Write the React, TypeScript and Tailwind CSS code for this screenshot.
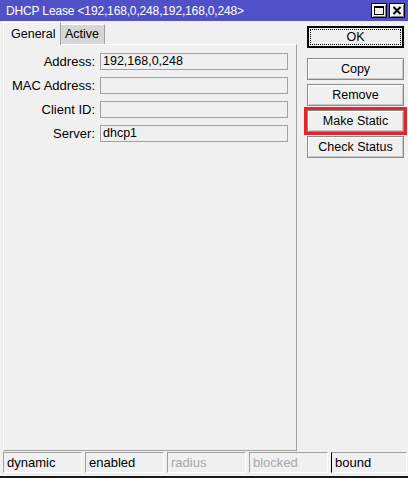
import { type ReactNode } from 'react';

const font = { fontFamily: '"Liberation Sans", Arial, sans-serif' };

function TitleButton({ children }: { children: ReactNode }) {
  return (
    <div className="w-[16px] h-[15px] bg-[#f0f0f0] border border-black flex items-center justify-center shadow-[inset_1px_1px_0_#fff,inset_-1px_-1px_0_#808080]">
      {children}
    </div>
  );
}

function Field({ label, value }: { label: string; value?: string }) {
  return (
    <div className="flex items-center h-[17px]">
      <div className="w-[92px] text-right text-[13px] text-black leading-none pr-[1px]">{label}</div>
      <div className="ml-[4px] w-[188px] h-[17px] border border-[#a0a0a0] bg-[#f0f0f0] text-[12.5px] leading-[15px] pl-[2px] text-black">
        {value}
      </div>
    </div>
  );
}

function Btn({ children, highlight }: { children: ReactNode; highlight?: boolean }) {
  return (
    <button
      type="button"
      className={
        'h-[22px] w-full border border-[#8a8a8a] bg-[#f0f0f0] text-[12.5px] text-black leading-none shadow-[inset_1px_1px_0_#fff,inset_-1px_-1px_0_#c8c8c8] ' +
        (highlight ? 'outline-[3px] outline-solid outline-[#e4252d] outline-offset-0' : '')
      }
    >
      {children}
    </button>
  );
}

function Status({ text, disabled, dark, grow }: { text: string; disabled?: boolean; dark?: boolean; grow?: boolean }) {
  return (
    <div
      className={
        'h-[21px] border-t border-l border-r border-b border-t-[#a0a0a0] border-r-white border-b-white text-[13px] leading-[19px] pl-[3px] ' +
        (dark ? 'border-l-black ' : 'border-l-[#a0a0a0] ') +
        (disabled ? 'text-[#a8a8a8] ' : 'text-black ') +
        (grow ? 'flex-1' : 'w-[79px]')
      }
    >
      {text}
    </div>
  );
}

export default function App() {
  return (
    <div style={font} className="w-[408px] h-[478px] bg-[#f0f0f0] flex flex-col overflow-hidden border-b-2 border-[#1a1a1a]">
      <div className="h-[21px] bg-[#5050c8] flex items-center pl-[6px] pr-[3px] shrink-0">
        <div className="text-white text-[12px] leading-none tracking-[-0.15px] flex-1 whitespace-nowrap">
          DHCP Lease &lt;192,168,0,248,192,168,0,248&gt;
        </div>
        <div className="flex gap-[2px]">
          <TitleButton>
            <div className="w-[10px] h-[9px] border border-black border-t-2" />
          </TitleButton>
          <TitleButton>
            <svg width="10" height="9" viewBox="0 0 10 9">
              <path d="M1.5 1 L8.5 8 M8.5 1 L1.5 8" stroke="#000" strokeWidth="2" />
            </svg>
          </TitleButton>
        </div>
      </div>

      <div className="flex flex-1 min-h-0">
        <div className="w-[297px] pl-[3px] flex flex-col">
          <div className="flex items-end h-[23px]">
            <div className="h-[23px] w-[58px] border-t border-l border-white border-r border-r-[#a0a0a0] bg-[#f0f0f0] text-[12.5px] text-black flex items-center pl-[7px] relative top-[1px]">
              General
            </div>
            <div className="h-[20px] w-[44px] border-t border-white border-r border-r-[#a0a0a0] bg-[#d6d6d6] text-[12.5px] text-black flex items-center pl-[4px]">
              Active
            </div>
          </div>
          <div className="flex-1 border-t border-l border-white border-r border-b border-r-[#a0a0a0] border-b-[#a0a0a0] pt-[8px] flex flex-col gap-[7px]">
            <Field label="Address:" value="192,168,0,248" />
            <Field label="MAC Address:" />
            <Field label="Client ID:" />
            <Field label="Server:" value="dhcp1" />
          </div>
        </div>

        <div className="ml-[10px] w-[97px] pt-[5px] flex flex-col">
          <button
            type="button"
            className="h-[22px] w-full border-2 border-black bg-[#f0f0f0] text-[12.5px] text-black leading-none p-[1px]"
          >
            <div className="h-full w-full border border-dotted border-black flex items-center justify-center">OK</div>
          </button>
          <div className="mt-[10px] flex flex-col gap-[4px]">
            <Btn>Copy</Btn>
            <Btn>Remove</Btn>
            <Btn highlight>Make Static</Btn>
            <Btn>Check Status</Btn>
          </div>
        </div>
      </div>

      <div className="flex gap-[3px] pl-[3px] pr-[1px] pt-[1px] pb-[3px] shrink-0">
        <Status text="dynamic" />
        <Status text="enabled" />
        <Status text="radius" disabled />
        <Status text="blocked" disabled />
        <Status text="bound" dark grow />
      </div>
    </div>
  );
}
